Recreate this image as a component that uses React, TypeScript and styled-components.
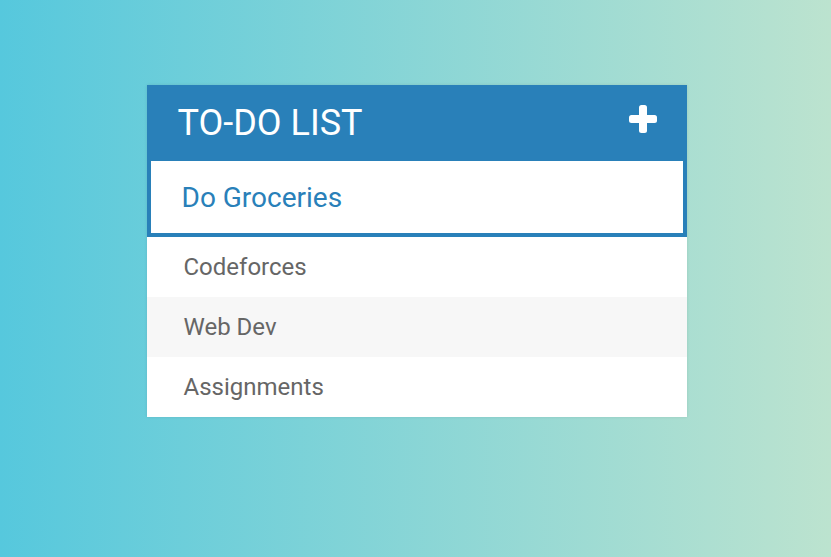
import React, { useState } from 'react';
import styled, { createGlobalStyle } from 'styled-components';

const GlobalStyle = createGlobalStyle`
  html, body {
    margin: 0;
    padding: 0;
  }
  body {
    font-family: Roboto, "Liberation Sans", Arial, sans-serif;
    background: linear-gradient(to right, #56c8dd, #bce3cf);
    min-height: 100vh;
  }
`;

const Page = styled.div`
  display: flex;
  justify-content: center;
  padding: 85px 0 0 2px;
  min-height: 100vh;
  box-sizing: border-box;
`;

const Card = styled.div`
  width: 540px;
  background: #fff;
  box-shadow: 0 0 3px rgba(0, 0, 0, 0.1);
  align-self: flex-start;
`;

const Header = styled.div`
  height: 76px;
  background: #2980b9;
  display: flex;
  align-items: center;
  justify-content: space-between;
  padding: 0 29px 0 31px;
  box-sizing: border-box;
`;

const Title = styled.h1`
  margin: 0;
  font-size: 36px;
  font-weight: 400;
  color: #fff;
`;

const AddButton = styled.button`
  border: 0;
  background: none;
  padding: 0;
  display: flex;
  cursor: pointer;
  margin-top: -8px;
`;

const NewTodo = styled.input`
  display: block;
  width: 100%;
  height: 76px;
  box-sizing: border-box;
  border: 4px solid #2980b9;
  border-top: 0;
  outline: none;
  padding: 0 0 0 31px;
  font-family: Roboto, "Liberation Sans", Arial, sans-serif;
  font-size: 28px;
  color: #2980b9;
  caret-color: #2980b9;
  background: #fff;
`;

const List = styled.ul`
  list-style: none;
  margin: 0;
  padding: 0;
`;

const Item = styled.li<{ $alt: boolean }>`
  height: 60px;
  display: flex;
  align-items: center;
  padding-left: 37px;
  font-size: 24px;
  color: #666;
  background: ${(p) => (p.$alt ? '#f7f7f7' : '#fff')};
`;

const PlusIcon = () => (
  <svg width="30" height="30" viewBox="0 0 30 30">
    <rect x="11" y="1" width="8" height="28" rx="2.5" fill="#fff" />
    <rect x="1" y="11" width="28" height="8" rx="2.5" fill="#fff" />
  </svg>
);

const App: React.FC = () => {
  const [text, setText] = useState('Do Groceries');
  const todos = ['Codeforces', 'Web Dev', 'Assignments'];

  return (
    <>
      <GlobalStyle />
      <Page>
        <Card>
          <Header>
            <Title>TO-DO LIST</Title>
            <AddButton>
              <PlusIcon />
            </AddButton>
          </Header>
          <NewTodo autoFocus value={text} onChange={(e) => setText(e.target.value)} />
          <List>
            {todos.map((todo, i) => (
              <Item key={todo} $alt={i % 2 === 1}>
                {todo}
              </Item>
            ))}
          </List>
        </Card>
      </Page>
    </>
  );
};

export default App;
